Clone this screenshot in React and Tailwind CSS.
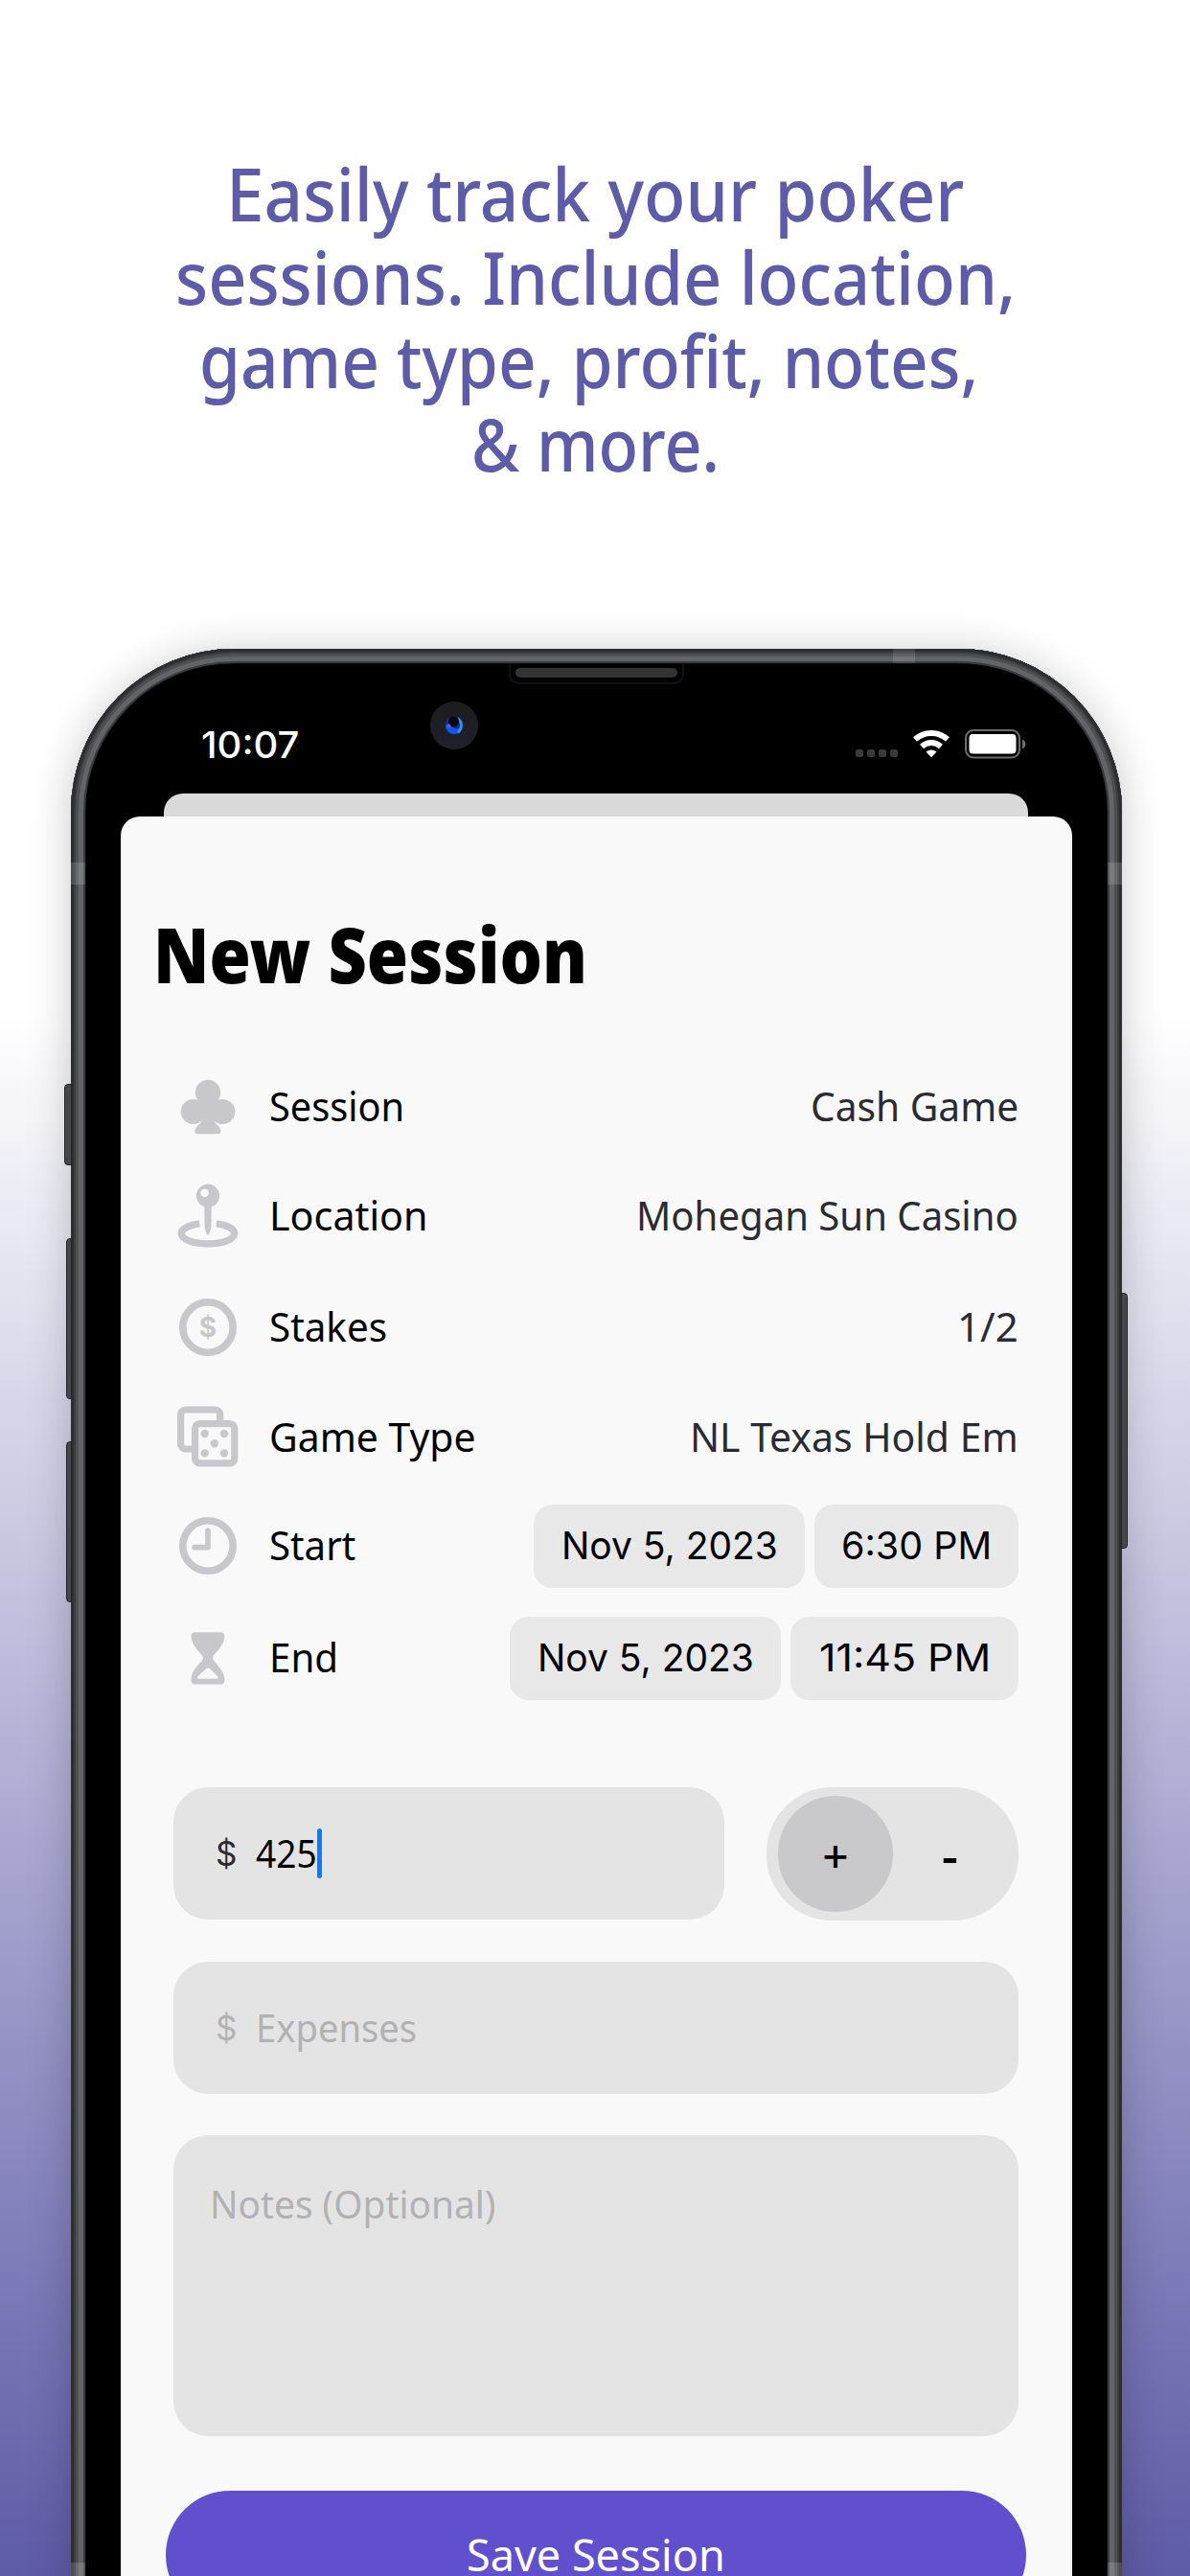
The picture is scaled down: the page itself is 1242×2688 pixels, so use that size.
import { useLayoutEffect, useRef, useState } from "react";

/* Single line of text condensed or widened to an exact width. */
function Fit({ w, children, className = "" }) {
  const ref = useRef(null);
  const [scale, setScale] = useState(1);
  useLayoutEffect(() => {
    setScale(w / ref.current.offsetWidth);
  }, [w]);
  return (
    <span className="block shrink-0" style={{ width: w }}>
      <span
        ref={ref}
        className={`inline-block origin-left whitespace-nowrap align-top ${className}`}
        style={{ transform: `scaleX(${scale})` }}
      >
        {children}
      </span>
    </span>
  );
}

function Icon({ children }) {
  return (
    <svg width="66" height="68" viewBox="-33 -34 66 68" fill="#c8c8cc" stroke="none" className="shrink-0">
      {children}
    </svg>
  );
}

const ClubIcon = (
  <Icon>
    <circle cx="0" cy="-15" r="13.2" />
    <circle cx="-15.3" cy="5" r="13" />
    <circle cx="15.3" cy="5" r="13" />
    <path d="M-8 -6H8L5 12Q7 17 11 20Q13.5 22 13.5 25Q13.5 28.3 10.5 28.3H-10.5Q-13.5 28.3 -13.5 25Q-13.5 22 -11 20Q-7 17 -5 12Z" />
  </Icon>
);

const PinIcon = (
  <Icon>
    <path
      fillRule="evenodd"
      d="M0 -33.6a12.3 12.3 0 0 1 3.6 24V8Q3.2 17 0 20Q-3.2 17 -3.6 8V-9.6A12.3 12.3 0 0 1 0 -33.6ZM-3.4 -28.6a4.3 4.3 0 1 0 .01 0Z"
    />
    <path
      fill="none"
      stroke="#c8c8cc"
      strokeWidth="7.3"
      d="M8.7 7.8C20 9.3 27.8 13.3 27.8 18C27.8 24.5 15 28.8 0 28.8S-27.8 24.5 -27.8 18C-27.8 13.3 -20 9.3 -8.7 7.8"
    />
  </Icon>
);

const StakesIcon = (
  <Icon>
    <circle r="26.2" fill="none" stroke="#c8c8cc" strokeWidth="7.6" />
    <text y="10.2" textAnchor="middle" className="font-['Inter',sans-serif] text-[28px] font-bold">
      $
    </text>
  </Icon>
);

const DiceIcon = (
  <Icon>
    <g fill="none" stroke="#c8c8cc" strokeWidth="7.2">
      <rect x="-13.4" y="-14.4" width="41.2" height="41.2" rx="5" />
      <path d="M12.7 -16V-24A5 5 0 0 0 7.7 -29H-23.4A5 5 0 0 0 -28.4 -24V7A5 5 0 0 0 -23.4 12H-15" />
    </g>
    <circle cx="-3.3" cy="-4" r="4.2" />
    <circle cx="17" cy="-4" r="4.2" />
    <circle cx="6.8" cy="6.2" r="4.2" />
    <circle cx="-3.3" cy="16.4" r="4.2" />
    <circle cx="17" cy="16.4" r="4.2" />
  </Icon>
);

const ClockIcon = (
  <Icon>
    <circle r="26.2" fill="none" stroke="#c8c8cc" strokeWidth="7.6" />
    <path d="M0 -16V1.6H-14" fill="none" stroke="#c8c8cc" strokeWidth="5.6" strokeLinecap="round" strokeLinejoin="round" />
  </Icon>
);

const HourglassIcon = (
  <Icon>
    <path
      fillRule="evenodd"
      d="M-13.5 -26.8H13.5Q17.3 -26.8 17.3 -22.5C17 -11 5 -4.5 5 0C5 4.5 17.3 11 17.3 23Q17.3 27.5 13.5 27.5H-13.5Q-17.5 27.5 -17.5 23C-17.5 11 -5 4.5 -5 0C-5 -4.5 -17 -11 -17.5 -22.5Q-17.5 -26.8 -13.5 -26.8ZM-10 21.8H9.5Q11.5 21.3 10 19L2 11.2Q0 9.8 -2 11.2L-10.2 19Q-12 21.3 -10 21.8Z"
    />
  </Icon>
);

const rows = [
  { icon: ClubIcon, label: "Session", lw: 141, value: "Cash Game", vw: 217, h: "h-[114px]" },
  { icon: PinIcon, label: "Location", lw: 166, value: "Mohegan Sun Casino", vw: 399, h: "h-[114px]" },
  { icon: StakesIcon, label: "Stakes", lw: 123, value: "1/2", vw: 64, h: "h-[118px]" },
  { icon: DiceIcon, label: "Game Type", lw: 215, value: "NL Texas Hold Em", vw: 343, h: "h-[112px]" },
  { icon: ClockIcon, label: "Start", lw: 90, date: "Nov 5, 2023", time: "6:30 PM", tw: 157, pw: "w-[213px]", h: "h-[114px]" },
  { icon: HourglassIcon, label: "End", lw: 72, date: "Nov 5, 2023", time: "11:45 PM", tw: 179, pw: "w-[238px]", h: "h-[120px]" },
];

const pill = "flex h-[87px] items-center justify-center rounded-[20px] bg-[#e8e8e8] font-['Inter',sans-serif] text-[40px] text-black";

function Row({ row }) {
  return (
    <div className={`flex items-center ${row.h}`}>
      {row.icon}
      <div className="ml-[31px] grow pb-[2px]">
        <Fit w={row.lw}>{row.label}</Fit>
      </div>
      {row.value ? (
        <div className="pb-[2px] text-[#2b2b33]">
          <Fit w={row.vw}>{row.value}</Fit>
        </div>
      ) : (
        <div className="flex gap-[10px]">
          <div className={`${pill} w-[283px]`}>
            <Fit w={226}>{row.date}</Fit>
          </div>
          <div className={`${pill} ${row.pw}`}>
            <Fit w={row.tw}>{row.time}</Fit>
          </div>
        </div>
      )}
    </div>
  );
}

function StatusIcons() {
  return (
    <svg width="180" height="32" viewBox="891 760 180 32">
      <g fill="#3a3a3a">
        <rect x="892" y="782" width="8" height="8" rx="2.5" />
        <rect x="904" y="782" width="8" height="8" rx="2.5" />
        <rect x="916" y="782" width="8" height="8" rx="2.5" />
        <rect x="928" y="782" width="8" height="8" rx="2.5" />
      </g>
      <g fill="none" stroke="#fff" strokeWidth="6">
        <path d="M954 771.5Q961.5 765 971 765T988 771.5" />
        <path d="M961 779Q965.5 775 971 775T981 779" />
      </g>
      <path d="M965.5 784.5Q971 780.5 976.5 784.5L971 790.3Z" fill="#fff" />
      <rect x="1007" y="762" width="56" height="28.5" rx="8" fill="none" stroke="#6c6c6c" strokeWidth="2" />
      <rect x="1010.5" y="766" width="49" height="20.5" rx="4" fill="#fff" />
      <path d="M1066 771.5Q1069.5 773.5 1069.5 776.5T1066 781.5Z" fill="#6c6c6c" />
    </svg>
  );
}

const headline = [
  { text: "Easily track your poker", w: 770 },
  { text: "sessions. Include location,", w: 877 },
  { text: "game type, profit, notes,", w: 813, shift: "-ml-[14px]" },
  { text: "& more.", w: 259 },
];

export default function App() {
  return (
    <div className="relative h-[2688px] w-[1242px] overflow-hidden bg-[linear-gradient(180deg,#ffffff_0px,#ffffff_1060px,#5e5ba7_2688px)] font-['Noto_Sans',sans-serif]">
      <h1 className="flex h-[677px] flex-col items-center pt-[158px] text-[76px] leading-[87px] font-medium text-[#5e5ca9]">
        {headline.map((l) => (
          <div key={l.text} className={l.shift}>
            <Fit w={l.w}>{l.text}</Fit>
          </div>
        ))}
      </h1>

      <div className="relative ml-[74px] h-[2200px] w-[1097px] rounded-t-[170px] bg-[#2a2c30] shadow-[0_4px_44px_rgba(0,0,0,0.22)]">
        <div className="absolute top-[454px] -left-[7px] h-[85px] w-[8px] rounded-l-[4px] border border-[#222428] bg-[#45474a]" />
        <div className="absolute top-[615px] -left-[5px] h-[168px] w-[6px] rounded-l-[4px] border border-[#222428] bg-[#45474a]" />
        <div className="absolute top-[827px] -left-[5px] h-[168px] w-[6px] rounded-l-[4px] border border-[#222428] bg-[#45474a]" />
        <div className="absolute top-[672px] -right-[6px] h-[267px] w-[7px] rounded-r-[4px] border border-[#222428] bg-[#45474a]" />

        <div className="h-full rounded-t-[170px] bg-black pt-[15px] shadow-[inset_0_0_0_3px_#2c2e32,inset_0_0_0_5px_#3b3d41,inset_0_0_0_8px_#4d4f53,inset_0_0_0_13px_#626468,inset_0_0_0_15px_#3a3b42,inset_0_0_0_16px_#0c0c14]">
          <div className="absolute top-0 left-[858px] h-[15px] w-[23px] bg-white/10" />
          <div className="absolute top-[223px] left-0 h-[23px] w-[15px] bg-white/15" />
          <div className="absolute top-[223px] right-0 h-[23px] w-[15px] bg-white/15" />
          <div className="absolute top-[1997px] left-0 h-[23px] w-[15px] bg-white/15" />
          <div className="absolute top-[1997px] right-0 h-[23px] w-[15px] bg-white/15" />

          <div className="mx-auto flex h-[22px] w-[183px] items-center justify-center rounded-b-[10px] border-2 border-t-0 border-[#101116]">
            <div className="h-[10px] w-[169px] rounded-full bg-[#333333]" />
          </div>

          <div className="flex h-[114px] items-start pr-[100px] pl-[136px]">
            <div className="mt-[39px] font-['Inter',sans-serif] text-[38px] leading-[48px] font-medium text-white">
              <Fit w={102}>10:07</Fit>
            </div>
            <div className="mt-[18px] ml-[137px] flex size-[50px] items-center justify-center rounded-full bg-gradient-to-b from-[#1c1c1d] to-[#20212a]">
              <svg width="20" height="20" viewBox="0 0 20 20">
                <circle cx="10" cy="10" r="9.5" fill="#0b2f9c" />
                <path d="M1 10A9 9 0 0 0 19 10Q14 18 4 8Z" fill="#1455e6" />
                <path d="M14 2.5Q21 10 14 17.5" fill="none" stroke="#3f8fe0" strokeWidth="2.6" />
                <circle cx="9.5" cy="6" r="5.5" fill="#02030c" />
                <circle cx="4.5" cy="10.5" r="2" fill="#6a52d8" />
              </svg>
            </div>
            <div className="mt-[46px] ml-auto -mr-px">
              <StatusIcons />
            </div>
          </div>

          <div className="ml-[97px] h-[24px] w-[902px] rounded-t-[20px] bg-[#dadada]" />

          <div className="ml-[52px] h-[2000px] w-[993px] rounded-t-[20px] bg-[#f9f9f9] pt-[91px] text-black">
            <h2 className="pl-[34px] text-[80px] leading-[104px] font-black">
              <Fit w={453}>New Session</Fit>
            </h2>

            <div className="mt-[51px] pr-[56px] pl-[58px] text-[42px] leading-[56px]">
              {rows.map((r) => (
                <Row key={r.label} row={r} />
              ))}
            </div>

            <div className="mt-[75px] flex flex-col gap-[43px] pr-[56px] pl-[55px] text-[40px] leading-[56px]">
              <div className="flex justify-between">
                <div className="flex h-[138px] w-[575px] items-center rounded-[36px] bg-[#e4e4e4] pl-[44px]">
                  <span className="w-[42px] font-['Inter',sans-serif] text-[35px] text-[#2b2b33]">$</span>
                  <Fit w={64}>425</Fit>
                  <span className="h-[52px] w-[5px] rounded-full bg-[#0a7aff]" />
                </div>
                <div className="flex h-[139px] w-[263px] items-center rounded-[68px] bg-[#e4e4e4] px-[12px]">
                  <div className="flex size-[121px] items-center justify-center rounded-full bg-[#c9c9cb] pt-[2px] text-[48px] font-medium">+</div>
                  <div className="flex w-[120px] items-center justify-center text-[54px] font-medium">-</div>
                </div>
              </div>
              <div className="flex h-[138px] items-center rounded-[36px] bg-[#e4e4e4] pl-[44px] text-[#b2b2b4]">
                <span className="w-[42px] font-['Inter',sans-serif] text-[35px]">$</span>
                <Fit w={168}>Expenses</Fit>
              </div>
              <div className="h-[314px] rounded-[36px] bg-[#e4e4e4] pt-[44px] pl-[38px] text-[#b2b2b4]">
                <Fit w={298}>Notes (Optional)</Fit>
              </div>
            </div>

            <div className="mt-[57px] ml-[47px] flex h-[134px] w-[898px] items-center justify-center rounded-full bg-[#6150ce] text-[45px] leading-[60px] text-white">
              <Fit w={270}>Save Session</Fit>
            </div>
          </div>
        </div>
      </div>
    </div>
  );
}
